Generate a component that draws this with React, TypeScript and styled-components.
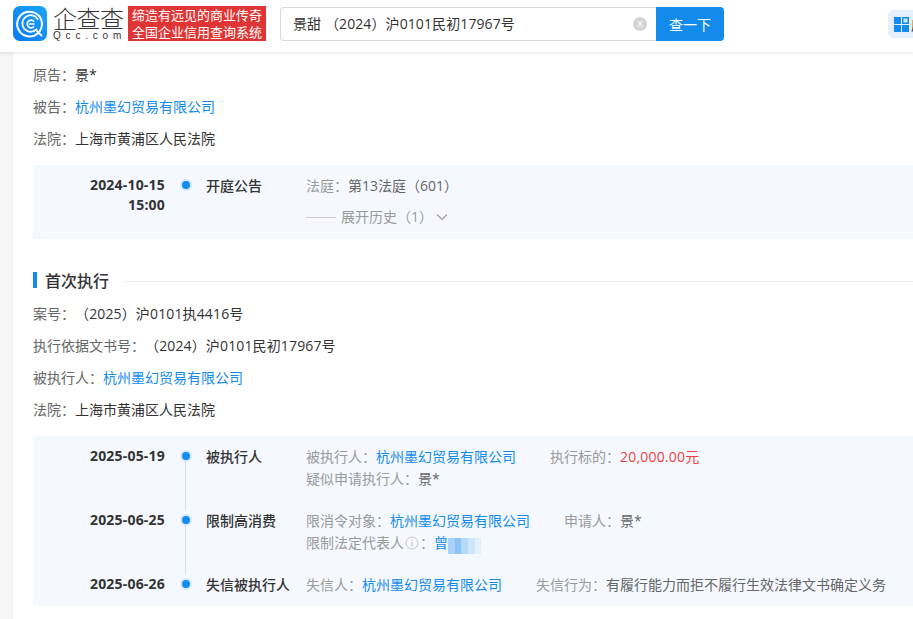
import styled, { createGlobalStyle } from "styled-components";

const GlobalStyle = createGlobalStyle`
  html, body {
    margin: 0;
    height: 100%;
    overflow: hidden;
    background: #f6f6f6;
    font-family: "Open Sans", "Noto Sans CJK SC", sans-serif;
    font-size: 14px;
    color: #333;
    text-spacing-trim: space-all;
  }
  * {
    box-sizing: border-box;
  }
`;

const Page = styled.div`
  width: 913px;
  height: 619px;
  overflow: hidden;
  position: relative;
`;

const Header = styled.header`
  height: 52px;
  background: #fff;
  box-shadow: 0 1px 4px rgba(0, 0, 0, 0.12);
  display: flex;
  align-items: flex-start;
  padding: 6px 0 0 13px;
  position: relative;
  overflow: hidden;
  & > * {
    flex-shrink: 0;
  }
`;

const LogoText = styled.div`
  margin-left: 6px;
  width: 72px;
  display: flex;
  flex-direction: column;
  color: #333;
`;

const LogoName = styled.span`
  font-size: 24px;
  line-height: 25px;
  font-weight: 300;
  letter-spacing: -0.5px;
  white-space: nowrap;
`;

const LogoDomain = styled.span`
  font-family: "Liberation Sans", sans-serif;
  font-size: 10px;
  line-height: 10px;
  letter-spacing: 4.8px;
  white-space: nowrap;
`;

const Slogan = styled.div`
  margin-left: 3px;
  width: 138px;
  height: 35px;
  background: #e03535;
  color: #fff;
  font-size: 13px;
  line-height: 17px;
  text-align: center;
  padding-top: 1px;
  white-space: nowrap;
`;

const SearchBox = styled.div`
  margin: 1px 0 0 14px;
  width: 376px;
  height: 34px;
  border: 1px solid #d9d9d9;
  border-right: none;
  border-radius: 4px 0 0 4px;
  display: flex;
  align-items: center;
  justify-content: space-between;
  padding: 0 9px 0 12px;
`;

const SearchText = styled.span`
  color: #333;
  line-height: 32px;
  letter-spacing: 0.1px;
  white-space: nowrap;
`;

const ClearIcon = styled.span`
  width: 14px;
  height: 14px;
  border-radius: 50%;
  background: #d4d4d4;
  color: #fff;
  font-size: 11px;
  line-height: 13px;
  text-align: center;
  font-family: "Liberation Sans", sans-serif;
`;

const SearchButton = styled.button`
  margin-top: 1px;
  width: 68px;
  height: 34px;
  border: none;
  border-radius: 0 4px 4px 0;
  background: #128bed;
  color: #fff;
  font: inherit;
  padding: 0;
`;

const AppTab = styled.div`
  margin: 4px 0 0 164px;
  height: 28px;
  width: 60px;
  background: #e5effd;
  border-radius: 5px;
  display: flex;
  align-items: center;
  padding-left: 6px;
  gap: 2px;
  font-size: 14px;
  white-space: nowrap;
`;

const Content = styled.main`
  margin-left: 13px;
  height: 567px;
  background: #fff;
  padding: 7px 0 0 20px;
`;

const InfoRow = styled.div`
  height: 32px;
  line-height: 32px;
  color: #666;
  white-space: nowrap;
`;

const Plain = styled.span`
  color: #333;
`;

const CaseNumber = styled.span`
  color: #333;
  letter-spacing: 0.14px;
`;

const CompanyLink = styled.a`
  color: #128bed;
`;

const Panel = styled.section<{ $tall?: boolean }>`
  margin-top: 10px;
  background: #f5f9ff;
  padding: 10px 0 ${(p) => (p.$tall ? "11px" : "10px")};
`;

const EventRow = styled.div<{ $last?: boolean }>`
  display: grid;
  grid-template-columns: 132px 41px 100px 1fr;
  min-height: ${(p) => (p.$last ? "22px" : "44px")};
`;

const DateCell = styled.div<{ $spaced?: boolean }>`
  text-align: right;
  font-weight: 700;
  line-height: 20px;
  color: #333;
  letter-spacing: 0.2px;
  padding-bottom: ${(p) => (p.$spaced ? "20px" : "0")};
`;

const Axis = styled.div`
  display: flex;
  flex-direction: column;
  align-items: center;
  padding-top: 4px;
`;

const Dot = styled.span`
  width: 12px;
  height: 12px;
  flex-shrink: 0;
  border-radius: 50%;
  background: #128bed;
  border: 2px solid #d3e7fb;
`;

const AxisLine = styled.span`
  flex: 1;
  width: 1px;
  background: #cfe3f8;
`;

const EventTitle = styled.div`
  font-weight: 500;
  line-height: 22px;
  color: #333;
  white-space: nowrap;
`;

const Details = styled.div<{ $spaced?: boolean }>`
  padding-bottom: ${(p) => (p.$spaced ? "20px" : "0")};
`;

const DetailLine = styled.div`
  display: flex;
  gap: 34px;
  line-height: 22px;
  white-space: nowrap;
`;

const Field = styled.span`
  color: #999;
  display: inline-flex;
  align-items: center;
`;

const FieldValue = styled.span<{ $tone?: "red" | "dark" }>`
  color: ${(p) => (p.$tone === "red" ? "#f04040" : "#666")};
  letter-spacing: ${(p) => (p.$tone === "red" ? "0.2px" : "0")};
`;

const Expand = styled.div`
  margin-top: 9px;
  display: flex;
  align-items: center;
  color: #999;
  line-height: 22px;
`;

const ExpandRule = styled.span`
  width: 30px;
  height: 1px;
  background: #ccc;
  margin-right: 5px;
`;

const SectionTitle = styled.div`
  margin: 25px 0 2px;
  height: 32px;
  display: flex;
  align-items: center;
`;

const TitleBar = styled.span`
  width: 4px;
  height: 16px;
  background: #128bed;
`;

const TitleText = styled.h3`
  margin: 0 15px 0 8px;
  font-size: 16px;
  font-weight: 500;
  color: #333;
`;

const TitleRule = styled.span`
  flex: 1;
  height: 1px;
  margin-top: 2px;
  background: #eee;
`;

const Mosaic = styled.span`
  display: inline-block;
  width: 33px;
  height: 16px;
  margin-top: 5px;
  background: linear-gradient(
    90deg,
    #a8d2f7 0 20%,
    #8cc4f5 20% 40%,
    #b5d9f8 40% 62%,
    #cfe6fa 62% 82%,
    #e2f0fc 82%
  );
`;

const WatermarkLayer = styled.div`
  position: absolute;
  inset: 0;
  overflow: hidden;
  pointer-events: none;
`;

const WatermarkText = styled.span`
  position: absolute;
  font-family: "Liberation Sans", sans-serif;
  font-size: 14px;
  letter-spacing: 5px;
  line-height: 14px;
  color: rgba(0, 0, 0, 0.025);
  white-space: nowrap;
  transform: rotate(-44deg);
  transform-origin: left center;
`;

const watermarks: { x: number; y: number }[] = [];
for (let i = -5; i < 6; i++) {
  for (let j = -8; j < 12; j++) {
    const x = 613 + i * 211 + j * 57;
    const y = 93 + i * 14 + j * 57;
    if (x > -120 && x < 913 && y > 60 && y < 720) watermarks.push({ x, y });
  }
}

const COMPANY = "杭州墨幻贸易有限公司";

function Logo() {
  return (
    <svg width="34" height="35" viewBox="0 0 34 35">
      <defs>
        <linearGradient id="logoBg" x1="0" y1="1" x2="1" y2="0">
          <stop offset="0" stopColor="#0a78f5" />
          <stop offset="1" stopColor="#1aa6f8" />
        </linearGradient>
      </defs>
      <rect width="34" height="35" rx="7" fill="url(#logoBg)" />
      <path
        d="M25 27.2A12.4 12.4 0 1 1 29 18a12 12 0 0 1-2.4 7.3"
        fill="none"
        stroke="#fff"
        strokeWidth="2"
        strokeLinecap="round"
      />
      <path d="M24 25l4.5 4.6" stroke="#fff" strokeWidth="2" strokeLinecap="round" />
      <path
        d="M23.5 23.4A8.3 8.3 0 1 1 24.6 13"
        fill="none"
        stroke="#fff"
        strokeWidth="1.8"
        strokeLinecap="round"
      />
      <path
        d="M20.6 15.2A3.8 3.8 0 1 0 20.6 20.8M16.5 18h4.5"
        fill="none"
        stroke="#fff"
        strokeWidth="1.7"
        strokeLinecap="round"
      />
    </svg>
  );
}

function GridIcon() {
  return (
    <svg width="15" height="15" viewBox="0 0 15 15" style={{ flexShrink: 0 }}>
      <rect x="0" y="0" width="7" height="7" fill="#128bed" />
      <rect x="8" y="0" width="7" height="7" fill="#128bed" />
      <rect x="9.5" y="1.5" width="4" height="4" fill="#cfe5fb" />
      <rect x="0" y="8" width="7" height="7" fill="#128bed" />
      <rect x="8" y="8" width="7" height="7" fill="#128bed" />
    </svg>
  );
}

function InfoIcon() {
  return (
    <svg width="14" height="14" viewBox="0 0 14 14" style={{ margin: "0 1px" }}>
      <circle cx="7" cy="7" r="6" fill="none" stroke="#c4c4c4" />
      <path d="M7 6v4.4M7 3.6v1.2" stroke="#c4c4c4" strokeWidth="1.1" />
    </svg>
  );
}

function Chevron() {
  return (
    <svg width="12" height="8" viewBox="0 0 12 8" style={{ marginLeft: 3 }}>
      <path d="M1 1.5l5 5 5-5" fill="none" stroke="#999" strokeWidth="1.1" />
    </svg>
  );
}

export default function App() {
  return (
    <Page>
      <GlobalStyle />
      <Header>
        <Logo />
        <LogoText>
          <LogoName>企查查</LogoName>
          <LogoDomain>Qcc.com</LogoDomain>
        </LogoText>
        <Slogan>
          缔造有远见的商业传奇
          <br />
          全国企业信用查询系统
        </Slogan>
        <SearchBox>
          <SearchText>景甜 （2024）沪0101民初17967号</SearchText>
          <ClearIcon>x</ClearIcon>
        </SearchBox>
        <SearchButton>查一下</SearchButton>
        <AppTab>
          <GridIcon />
          <Plain>应用</Plain>
        </AppTab>
      </Header>
      <Content>
        <InfoRow>
          原告：<Plain>景*</Plain>
        </InfoRow>
        <InfoRow>
          被告：<CompanyLink>{COMPANY}</CompanyLink>
        </InfoRow>
        <InfoRow>
          法院：<Plain>上海市黄浦区人民法院</Plain>
        </InfoRow>
        <Panel $tall>
          <EventRow>
            <DateCell>
              2024-10-15
              <br />
              15:00
            </DateCell>
            <Axis>
              <Dot />
            </Axis>
            <EventTitle>开庭公告</EventTitle>
            <div>
              <DetailLine>
                <Field>
                  法庭：<FieldValue>第13法庭（601）</FieldValue>
                </Field>
              </DetailLine>
              <Expand>
                <ExpandRule />
                展开历史（1）
                <Chevron />
              </Expand>
            </div>
          </EventRow>
        </Panel>

        <SectionTitle>
          <TitleBar />
          <TitleText>首次执行</TitleText>
          <TitleRule />
        </SectionTitle>
        <InfoRow>
          案号：<CaseNumber>（2025）沪0101执4416号</CaseNumber>
        </InfoRow>
        <InfoRow>
          执行依据文书号：<CaseNumber>（2024）沪0101民初17967号</CaseNumber>
        </InfoRow>
        <InfoRow>
          被执行人：<CompanyLink>{COMPANY}</CompanyLink>
        </InfoRow>
        <InfoRow>
          法院：<Plain>上海市黄浦区人民法院</Plain>
        </InfoRow>
        <Panel>
          <EventRow>
            <DateCell $spaced>2025-05-19</DateCell>
            <Axis>
              <Dot />
              <AxisLine />
            </Axis>
            <EventTitle>被执行人</EventTitle>
            <Details $spaced>
              <DetailLine>
                <Field>
                  被执行人：<CompanyLink>{COMPANY}</CompanyLink>
                </Field>
                <Field>
                  执行标的：<FieldValue $tone="red">20,000.00元</FieldValue>
                </Field>
              </DetailLine>
              <DetailLine>
                <Field>
                  疑似申请执行人：<FieldValue>景*</FieldValue>
                </Field>
              </DetailLine>
            </Details>
          </EventRow>
          <EventRow>
            <DateCell $spaced>2025-06-25</DateCell>
            <Axis>
              <Dot />
              <AxisLine />
            </Axis>
            <EventTitle>限制高消费</EventTitle>
            <Details $spaced>
              <DetailLine>
                <Field>
                  限消令对象：<CompanyLink>{COMPANY}</CompanyLink>
                </Field>
                <Field>
                  申请人：<FieldValue>景*</FieldValue>
                </Field>
              </DetailLine>
              <DetailLine>
                <Field>
                  限制法定代表人
                  <InfoIcon />：<CompanyLink>曾</CompanyLink>
                  <Mosaic />
                </Field>
              </DetailLine>
            </Details>
          </EventRow>
          <EventRow $last>
            <DateCell>2025-06-26</DateCell>
            <Axis>
              <Dot />
            </Axis>
            <EventTitle>失信被执行人</EventTitle>
            <Details>
              <DetailLine>
                <Field>
                  失信人：<CompanyLink>{COMPANY}</CompanyLink>
                </Field>
                <Field>
                  失信行为：<FieldValue>有履行能力而拒不履行生效法律文书确定义务</FieldValue>
                </Field>
              </DetailLine>
            </Details>
          </EventRow>
        </Panel>
      </Content>
      <WatermarkLayer>
        {watermarks.map((m) => (
          <WatermarkText key={`${m.x}-${m.y}`} style={{ left: m.x, top: m.y }}>
            EESF7DB
          </WatermarkText>
        ))}
      </WatermarkLayer>
    </Page>
  );
}
